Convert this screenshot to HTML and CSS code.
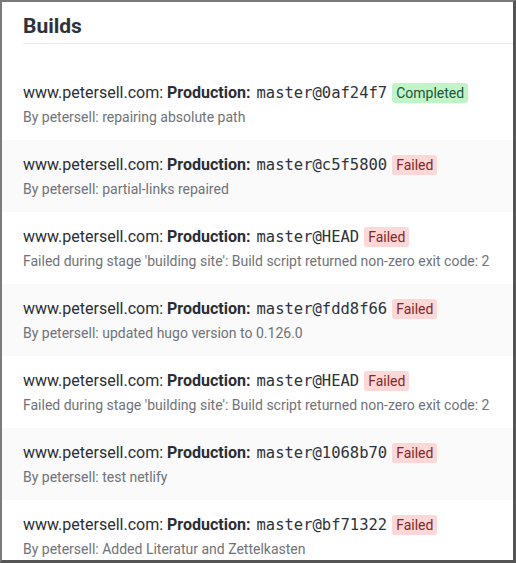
FILE: index.html
```html
<!DOCTYPE html>
<html>
<head>
<meta charset="utf-8">
<link rel="stylesheet" href="styles.css">
</head>
<body>
<div class="frame">
  <div class="header"><h2 class="title">Builds</h2></div>
  <ul class="builds">
    <li class="build">
      <div class="line"><span>www.petersell.com: </span><strong>Production:</strong> <code>master@0af24f7</code> <span class="badge ok">Completed</span></div>
      <div class="desc">By petersell: repairing absolute path</div>
    </li>
    <li class="build">
      <div class="line"><span>www.petersell.com: </span><strong>Production:</strong> <code>master@c5f5800</code> <span class="badge fail">Failed</span></div>
      <div class="desc">By petersell: partial-links repaired</div>
    </li>
    <li class="build">
      <div class="line"><span>www.petersell.com: </span><strong>Production:</strong> <code>master@HEAD</code> <span class="badge fail">Failed</span></div>
      <div class="desc">Failed during stage 'building site': Build script returned non-zero exit code: 2</div>
    </li>
    <li class="build">
      <div class="line"><span>www.petersell.com: </span><strong>Production:</strong> <code>master@fdd8f66</code> <span class="badge fail">Failed</span></div>
      <div class="desc">By petersell: updated hugo version to 0.126.0</div>
    </li>
    <li class="build">
      <div class="line"><span>www.petersell.com: </span><strong>Production:</strong> <code>master@HEAD</code> <span class="badge fail">Failed</span></div>
      <div class="desc">Failed during stage 'building site': Build script returned non-zero exit code: 2</div>
    </li>
    <li class="build">
      <div class="line"><span>www.petersell.com: </span><strong>Production:</strong> <code>master@1068b70</code> <span class="badge fail">Failed</span></div>
      <div class="desc">By petersell: test netlify</div>
    </li>
    <li class="build">
      <div class="line"><span>www.petersell.com: </span><strong>Production:</strong> <code>master@bf71322</code> <span class="badge fail">Failed</span></div>
      <div class="desc">By petersell: Added Literatur and Zettelkasten</div>
    </li>
  </ul>
</div>
</body>
</html>
```
FILE: styles.css
```css
html, body {
  margin: 0;
  padding: 0;
  height: 100%;
  overflow: hidden;
  background: #fff;
}
.frame {
  box-sizing: border-box;
  height: 563px;
  border-style: solid;
  border-width: 2px 3px 3px 2px;
  border-color: #7b7b7b #555 #555 #7b7b7b;
  overflow: hidden;
  font-family: Roboto, "Liberation Sans", sans-serif;
  color: #2a2e33;
}
.header {
  margin-left: 21px;
  height: 42px;
  box-sizing: border-box;
  padding-top: 12px;
  border-bottom: 1px solid #e5e7eb;
}
.title {
  margin: 0;
  font-size: 21px;
  line-height: 24px;
  font-weight: 700;
  color: #2d333a;
}
.builds {
  list-style: none;
  margin: 24px 0 0;
  padding: 0;
}
.build {
  height: 72px;
  box-sizing: border-box;
  padding: 13px 21px 11px;
}
.build:nth-child(even) {
  background: #fafafa;
}
.line {
  height: 24px;
  font-size: 16px;
  line-height: 24px;
  white-space: nowrap;
  display: flex;
  align-items: center;
}
.line span, .line strong {
  white-space: pre;
}
.line strong {
  font-weight: 700;
}
.line code {
  font-family: "DejaVu Sans Mono", monospace;
  font-size: 15.5px;
  line-height: 24px;
  color: #2d333a;
  margin-left: 6px;
}
.badge {
  margin-left: 5px;
  padding: 0 4px;
  border-radius: 3px;
  font-size: 14px;
  line-height: 20px;
}
.line .badge {
  white-space: nowrap;
}
.ok {
  background: #c0f5c8;
  color: #22543d;
}
.fail {
  background: #fed7d7;
  color: #822727;
}
.desc {
  font-size: 14px;
  line-height: 24px;
  color: #6f7378;
  white-space: nowrap;
}
```
